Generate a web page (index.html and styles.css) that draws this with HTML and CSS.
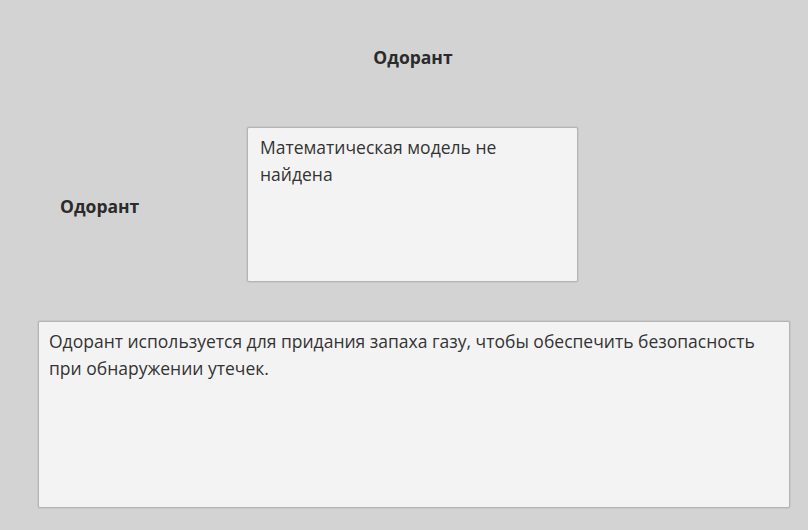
FILE: index.html
```html
<!DOCTYPE html>
<html lang="ru">
<head>
<meta charset="utf-8">
<link rel="stylesheet" href="styles.css">
</head>
<body>
<div class="page">
  <div class="title">Одорант</div>
  <div class="row">
    <div class="label">Одорант</div>
    <div class="box model">Математическая модель не найдена</div>
  </div>
  <div class="box desc">Одорант используется для придания запаха газу, чтобы обеспечить безопасность при обнаружении утечек.</div>
</div>
</body>
</html>
```
FILE: styles.css
```css
html, body {
  margin: 0;
  padding: 0;
  background: #d3d3d3;
}
.page {
  width: 808px;
  height: 530px;
  font-family: "Open Sans", "Noto Sans", sans-serif;
  color: #333333;
  font-size: 17.5px;
  display: flex;
  flex-direction: column;
}
.title {
  font-weight: bold;
  text-align: center;
  padding-left: 18px;
  margin-top: 45px;
  line-height: 24px;
  color: #2b2b2b;
}
.row {
  display: flex;
  align-items: center;
  margin-top: 58px;
}
.label {
  font-weight: bold;
  color: #2b2b2b;
  width: 247px;
  padding-left: 60px;
  box-sizing: border-box;
  margin-top: 2px;
}
.box {
  background: #f3f3f3;
  border: 1px solid #b4b4b4;
  border-radius: 2px;
  box-shadow: 0 0 0 1px #c8c8c8;
  box-sizing: border-box;
  line-height: 27px;
  padding: 6px 12px;
}
.model {
  width: 331px;
  height: 155px;
}
.desc {
  margin-top: 39px;
  margin-left: 38px;
  width: 752px;
  height: 187px;
  padding: 6px 18px 6px 10px;
}
```
